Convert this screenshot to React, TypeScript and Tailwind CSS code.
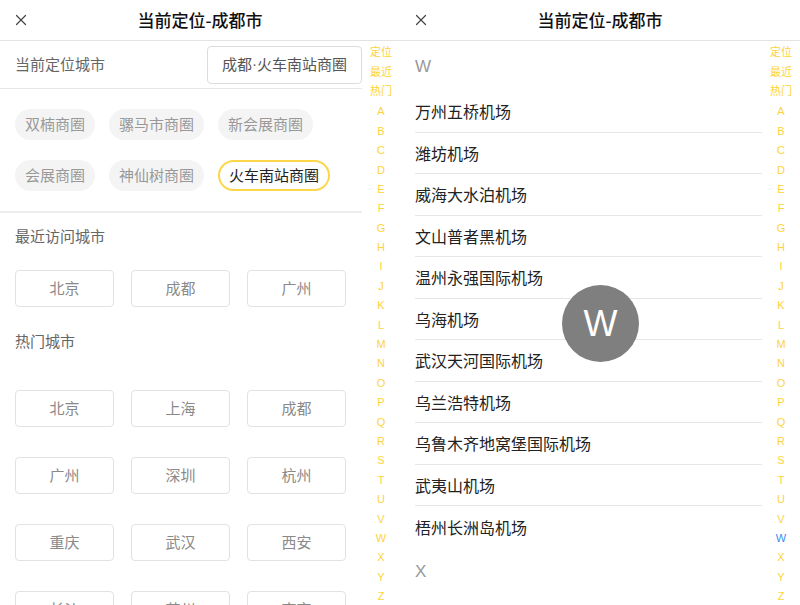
import React from 'react';

const INDEX = ['定位', '最近', '热门', ...'ABCDEFGHIJKLMNOPQRSTUVWXYZ'.split('')];

const font = { fontFamily: '"Noto Sans CJK SC", "Noto Sans", sans-serif' };
const latin = { fontFamily: '"Liberation Sans", Arial, sans-serif' };

function CloseIcon() {
  return (
    <svg width="12" height="12" viewBox="0 0 12 12" className="absolute left-[15px] top-[14px]">
      <path d="M1.5 1.5 L10.5 10.5 M10.5 1.5 L1.5 10.5" stroke="#444" strokeWidth="1.2" strokeLinecap="round" />
    </svg>
  );
}

function Header() {
  return (
    <div className="relative h-[41px] border-b border-[#e3e3e3] flex items-center justify-center shrink-0">
      <CloseIcon />
      <span className="text-[17px] font-medium text-[#111]">当前定位-成都市</span>
    </div>
  );
}

function IndexBar({ active }: { active?: string }) {
  return (
    <div className="w-[38px] shrink-0 flex flex-col items-center pt-[1px]">
      {INDEX.map((k) => (
        <div
          key={k}
          className={`h-[19.4px] flex items-center justify-center text-[11px] leading-none ${
            k === active ? 'text-[#3a8ef0]' : 'text-[#fdd33a]'
          }`}
        >
          {k.length === 1 ? (
            <span className="relative top-[2px]" style={latin}>
              {k}
            </span>
          ) : (
            k
          )}
        </div>
      ))}
    </div>
  );
}

const chips = [
  ['双楠商圈', '骡马市商圈', '新会展商圈'],
  ['会展商圈', '神仙树商圈', '火车南站商圈'],
];
const recent = ['北京', '成都', '广州'];
const hot = [
  ['北京', '上海', '成都'],
  ['广州', '深圳', '杭州'],
  ['重庆', '武汉', '西安'],
  ['长沙', '苏州', '南京'],
];

function CityBtn({ name }: { name: string }) {
  return (
    <div className="w-[99px] h-[37px] border border-[#e2e2e2] rounded-[4px] flex items-center justify-center text-[15px] text-[#8a8a8a]">
      {name}
    </div>
  );
}

function LeftScreen() {
  return (
    <div className="w-[400px] h-[605px] overflow-hidden bg-white flex flex-col" style={font}>
      <Header />
      <div className="flex flex-1 min-h-0">
        <div className="w-[362px] shrink-0">
          <div className="h-[48px] flex items-center justify-between pl-[15px] border-b border-[#e6e6e6]">
            <span className="text-[15px] text-[#666]">当前定位城市</span>
            <div className="h-[38px] w-[155px] border border-[#dcdcdc] rounded-[4px] flex items-center justify-center text-[15px] text-[#555]">
              成都<span style={latin}>·</span>火车南站商圈
            </div>
          </div>
          <div className="pl-[15px] pt-[20px] pb-[20px] flex flex-col gap-[20px]">
            {chips.map((row, i) => (
              <div key={i} className="flex gap-[14px]">
                {row.map((c) =>
                  c === '火车南站商圈' ? (
                    <div key={c} className="h-[31px] px-[9px] rounded-full border-2 border-[#fdd74a] flex items-center text-[15px] text-[#222]">
                      {c}
                    </div>
                  ) : (
                    <div key={c} className="h-[31px] px-[10px] rounded-full bg-[#f4f4f4] flex items-center text-[15px] text-[#999]">
                      {c}
                    </div>
                  )
                )}
              </div>
            ))}
          </div>
          <div className="h-[2px] bg-[#ececec]" />
          <div className="h-[46px] flex items-center pl-[15px] text-[15px] text-[#666]">最近访问城市</div>
          <div className="pl-[15px] pt-[11px] flex gap-[17px]">
            {recent.map((c) => (
              <CityBtn key={c} name={c} />
            ))}
          </div>
          <div className="h-[68px] flex items-center pl-[15px] text-[15px] text-[#666]">热门城市</div>
          <div className="pl-[15px] pt-[15px] flex flex-col gap-[30px]">
            {hot.map((row, i) => (
              <div key={i} className="flex gap-[17px]">
                {row.map((c) => (
                  <CityBtn key={c} name={c} />
                ))}
              </div>
            ))}
          </div>
        </div>
        <IndexBar />
      </div>
    </div>
  );
}

const airports = [
  '万州五桥机场',
  '潍坊机场',
  '威海大水泊机场',
  '文山普者黑机场',
  '温州永强国际机场',
  '乌海机场',
  '武汉天河国际机场',
  '乌兰浩特机场',
  '乌鲁木齐地窝堡国际机场',
  '武夷山机场',
  '梧州长洲岛机场',
];

function RightScreen() {
  return (
    <div className="relative w-[400px] h-[605px] overflow-hidden bg-white flex flex-col" style={font}>
      <Header />
      <div className="flex flex-1 min-h-0">
        <div className="w-[362px] shrink-0">
          <div className="h-[50px] flex items-center pl-[15px] pt-[2px] text-[17px] text-[#999]" style={latin}>
            W
          </div>
          {airports.map((a, i) => (
            <div
              key={a}
              className={`ml-[15px] h-[41.5px] flex items-center text-[16px] text-[#222] ${
                i < airports.length - 1 ? 'border-b border-[#e6e6e6]' : ''
              }`}
            >
              {a}
            </div>
          ))}
          <div className="h-[48px] flex items-center pl-[15px] text-[17px] text-[#999]" style={latin}>
            X
          </div>
        </div>
        <IndexBar active="W" />
      </div>
      {/* letter toast */}
      <div
        className="absolute left-[162px] top-[285px] w-[77px] h-[77px] rounded-full bg-[#7f7f7f] flex items-center justify-center text-white text-[36px]"
        style={latin}
      >
        W
      </div>
    </div>
  );
}

export default function App() {
  return (
    <div className="flex w-[800px] h-[605px] bg-white">
      <LeftScreen />
      <RightScreen />
    </div>
  );
}
